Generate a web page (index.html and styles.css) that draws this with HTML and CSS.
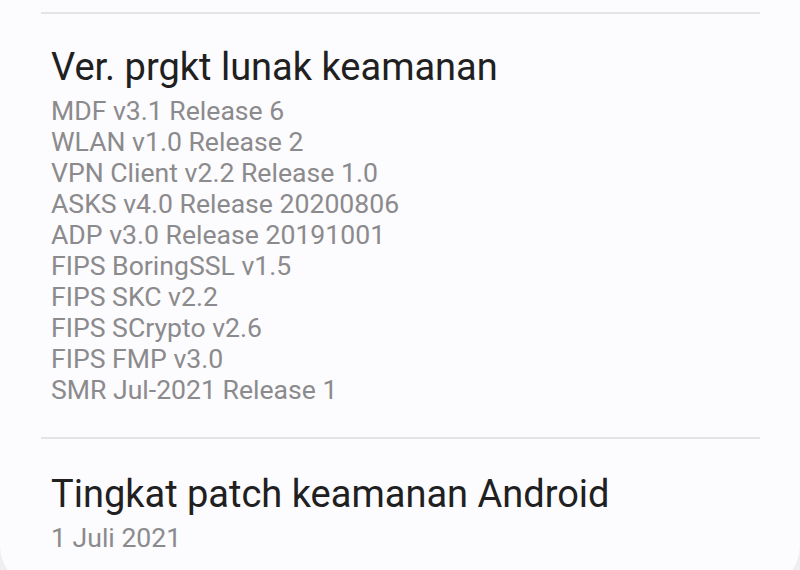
FILE: index.html
```html
<!DOCTYPE html>
<html lang="id">
<head>
  <meta charset="UTF-8" />
  <meta name="viewport" content="width=device-width, initial-scale=1.0"/>
  <title>Info perangkat lunak</title>
  <link rel="stylesheet" href="styles.css">
</head>
<body>
  <div class="card">
    <div class="item">
      <h2>Ver. prgkt lunak keamanan</h2>
      <div class="sub">
        <p>MDF v3.1 Release 6</p>
        <p>WLAN v1.0 Release 2</p>
        <p>VPN Client v2.2 Release 1.0</p>
        <p>ASKS v4.0 Release 20200806</p>
        <p>ADP v3.0 Release 20191001</p>
        <p>FIPS BoringSSL v1.5</p>
        <p>FIPS SKC v2.2</p>
        <p>FIPS SCrypto v2.6</p>
        <p>FIPS FMP v3.0</p>
        <p>SMR Jul-2021 Release 1</p>
      </div>
    </div>
    <div class="item">
      <h2>Tingkat patch keamanan Android</h2>
      <div class="sub">
        <p>1 Juli 2021</p>
      </div>
    </div>
  </div>
</body>
</html>
```

FILE: styles.css
```css
body { margin:0; background:#efeef1; font-family:Roboto, "Noto Sans", sans-serif; overflow:hidden; }
.card { background:#fcfbfe; border-radius:45px; margin-top:-40px; padding:52px 40px 0 41px; height:630px; box-sizing:border-box; }
.item { border-top:2px solid #e4e3e6; padding:29px 10px 32px; }
.item + .item { padding-top:31px; }
.item h2 { margin:0; font-size:38px; font-weight:400; line-height:48px; color:#202020; }
.sub { margin-top:4px; }
.sub p { margin:0; font-size:26.6px; line-height:31px; color:#8b8a8c; }
```
